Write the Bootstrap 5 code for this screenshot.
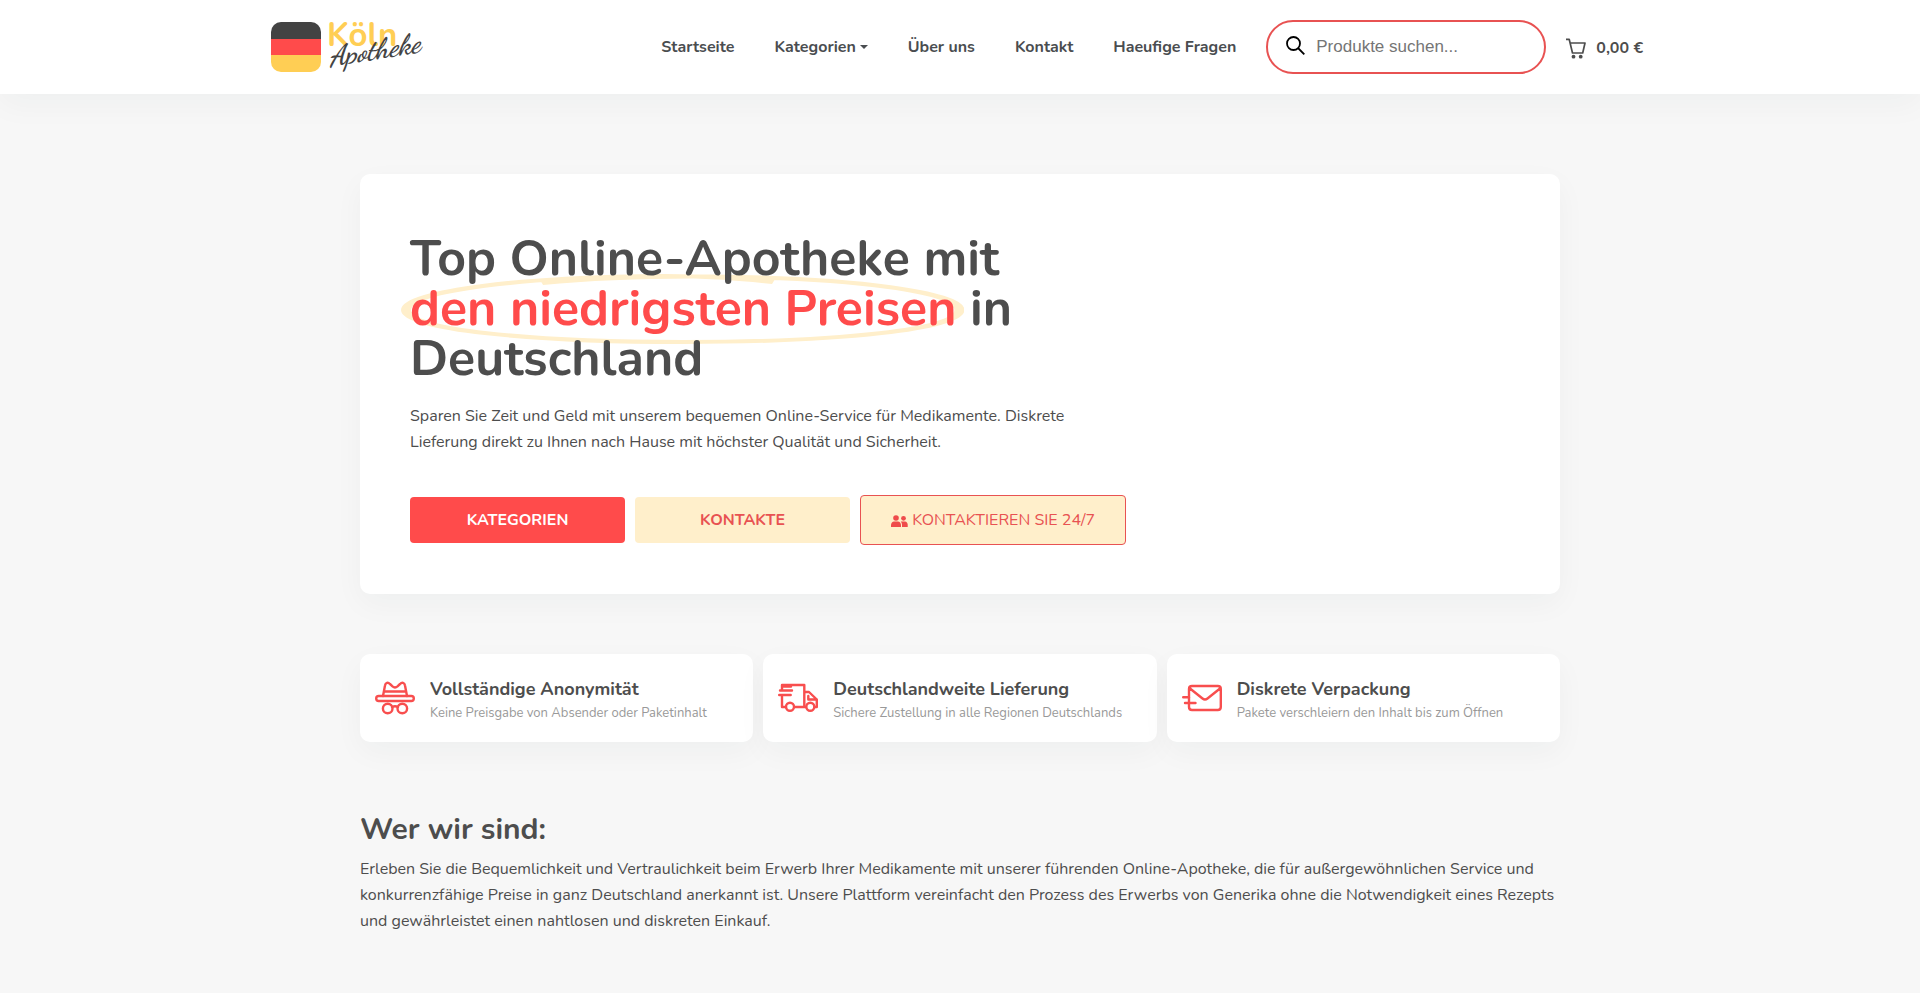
<!DOCTYPE html>
<html lang="de">
<head>
<meta charset="utf-8">
<meta name="viewport" content="width=device-width, initial-scale=1">
<title>Köln Apotheke</title>
<link href="https://cdn.jsdelivr.net/npm/bootstrap@5.3.0/dist/css/bootstrap.min.css" rel="stylesheet">
<style>
  :root { --ink: #4d4d4d; --brand: #ff4b4b; --cream: #ffefcb; --line: #e85252; }
  body { font-family: Nunito, Lato, "Open Sans", sans-serif; font-size: 16px; line-height: 26px; color: var(--ink); background: #f7f7f7; }
  .shade { box-shadow: 0 10px 30px rgba(20, 50, 60, .04); }
  .site-header { background: #fff; padding: 20px 0; }
  .wide-box { max-width: 1400px; padding: 0 11px; }
  .page-box { max-width: 1224px; }
  .main-menu { gap: 0 40px; margin-right: 30px; }
  .main-menu .nav-link { padding: 0; font-weight: 700; color: #4a4d50; }
  .main-menu .dropdown-toggle::after { margin-left: 4px; border-top-width: 4px; border-left-width: 4px; border-right-width: 4px; vertical-align: 3px; }
  .search-field { width: 280px; height: 54px; border: 2px solid var(--line); border-radius: 27px; padding: 0 18px; gap: 11px; }
  .search-field input { font: 17px "Liberation Sans", Arial, sans-serif; border: 0; outline: 0; min-width: 0; background: none; }
  .search-field input::placeholder { color: #757575; opacity: 1; }
  .cart-link { gap: 10px; margin: 2px 6px 0 20px; font-weight: 700; color: var(--ink); text-decoration: none; }
  .hero { background: #fff; border-radius: 10px; padding: 60px 50px 49px; margin-top: 80px; isolation: isolate; }
  .hero h1 { font-size: 50px; line-height: 50px; font-weight: 700; max-width: 670px; margin: 0; }
  .hero p { max-width: 670px; margin: 19px 0 40px; }
  .circled { position: relative; display: inline-block; color: var(--brand); }
  .circled svg { position: absolute; left: -9px; top: -10px; width: calc(100% + 17px); height: 70px; z-index: -1; }
  .hero-btns { gap: 10px; }
  .hero-btn { width: 215px; padding: 10px 12px; border: 0; border-radius: 4px; font-size: 16px; line-height: 26px; font-weight: 700; text-transform: uppercase; }
  .btn-brand, .btn-brand:hover { background: var(--brand); color: #fff; }
  .btn-cream, .btn-cream:hover { background: var(--cream); color: var(--line); }
  .btn-chat, .btn-chat:hover { width: auto; padding: 11px 30px; border: 1px solid var(--line); font-weight: 400; }
  .perks { display: grid; gap: 10px; grid-template-columns: repeat(auto-fit, minmax(340px, 1fr)); margin-top: 60px; }
  .perk { background: #fff; border-radius: 10px; padding: 22px 15px 18px; gap: 15px; }
  .perk h2 { font-size: 18px; line-height: 26px; font-weight: 700; margin: 0; }
  .perk p { font-size: 13px; line-height: 22px; color: #999; margin: 0; }
  .perk svg { stroke: #f84e4e; fill: none; stroke-width: 2.4; stroke-linecap: round; stroke-linejoin: round; }
  .about { margin-top: 70px; }
  .about h2 { font-size: 30px; line-height: 36px; font-weight: 700; margin: 0 0 8px; }
  .brand-logo { overflow: visible; }
  .logo-name { font: 700 33px Nunito, Lato, sans-serif; fill: #ffce54; }
  .logo-script { font: 700 28px "Dancing Script", "Liberation Serif", serif; font-style: italic; fill: #434343; }
</style>
</head>
<body>
<header class="site-header shade">
  <div class="container-fluid wide-box d-flex flex-wrap align-items-center">
    <a href="#" class="d-block me-auto" aria-label="Köln Apotheke">
      <svg class="brand-logo d-block" width="156" height="54" viewBox="0 0 156 54">
        <clipPath id="flag"><rect y="2" width="50" height="50" rx="10"/></clipPath>
        <g clip-path="url(#flag)"><path fill="#434343" d="M0 2h50v17H0z"/><path fill="#ff4b4b" d="M0 19h50v16H0z"/><path fill="#ffce54" d="M0 35h50v17H0z"/></g>
        <text class="logo-name" x="56" y="26">Köln</text>
        <text class="logo-script" x="59" y="46" transform="rotate(-9 59 46)">Apotheke</text>
      </svg>
    </a>
    <nav aria-label="Hauptmenü">
      <ul class="nav main-menu">
        <li class="nav-item"><a class="nav-link" href="#">Startseite</a></li>
        <li class="nav-item dropdown"><a class="nav-link dropdown-toggle" href="#" data-bs-toggle="dropdown">Kategorien</a></li>
        <li class="nav-item"><a class="nav-link" href="#">Über uns</a></li>
        <li class="nav-item"><a class="nav-link" href="#">Kontakt</a></li>
        <li class="nav-item"><a class="nav-link" href="#">Haeufige Fragen</a></li>
      </ul>
    </nav>
    <form class="search-field d-flex align-items-center" role="search">
      <label for="q" class="pb-1" aria-label="Produkte suchen"><svg class="d-block" width="19" height="19" viewBox="0 0 19 19" fill="none" stroke="#000" stroke-width="1.8"><circle cx="7.5" cy="7.5" r="6.5"/><path d="M12 12l6.300 6.300"/></svg></label>
      <input id="q" class="flex-grow-1 p-0" type="search" placeholder="Produkte suchen...">
    </form>
    <a href="#" class="cart-link d-flex align-items-center">
      <svg width="20" height="21" viewBox="0 0 20 21" fill="none" stroke="#4d4d4d" stroke-width="1.700" stroke-linejoin="round"><path d="M0 1.300h3.200L6.500 15h10.200L19 5H4.200"/><circle cx="7.500" cy="18.700" r="1.900" fill="#4d4d4d" stroke="none"/><circle cx="14.700" cy="18.700" r="1.900" fill="#4d4d4d" stroke="none"/></svg>
      <span>0,00&nbsp;€</span>
    </a>
  </div>
</header>

<main class="container-fluid page-box">
  <section class="hero shade">
    <h1>Top Online-Apotheke mit <span class="circled">den niedrigsten Preisen<svg viewBox="0 0 224 70" preserveAspectRatio="none" fill="none" stroke="#ffefcb" stroke-width="4" aria-hidden="true"><path d="M56 9C80 3 105 2 125 2.500C180 4 222 18 222 36C222 55 175 68 112 68C50 68 2 55 2 36C2 17 50 2 105 2C122 2 136 5 148 8"/></svg></span> in Deutschland</h1>
    <p>Sparen Sie Zeit und Geld mit unserem bequemen Online-Service für Medikamente. Diskrete Lieferung direkt zu Ihnen nach Hause mit höchster Qualität und Sicherheit.</p>
    <div class="hero-btns d-flex flex-wrap align-items-center">
      <button type="button" class="btn hero-btn btn-brand">Kategorien</button>
      <button type="button" class="btn hero-btn btn-cream">Kontakte</button>
      <button type="button" class="btn hero-btn btn-cream btn-chat"><svg width="17" height="12" viewBox="0 0 17 12" fill="#ef4b4b" aria-hidden="true"><circle cx="5" cy="3" r="2.800"/><circle cx="12.500" cy="3.300" r="2.400"/><path d="M0 12v-2c0-2 1.500-3.300 3-3.500h4c1.600.2 3 1.500 3 3.500v2zM11 12v-2c0-1.400-.5-2.500-1.300-3.400h4.300c1.500.2 2.700 1.400 2.700 3V12z"/></svg> Kontaktieren Sie 24/7</button>
    </div>
  </section>

  <section class="perks">
    <article class="perk shade d-flex align-items-center">
      <svg class="flex-shrink-0 mb-1" width="40" height="40" viewBox="0 0 40 40"><path d="M8 18L10 7.500C10.500 4.500 13 4 15 6l2.500 2.300c1.500 1.300 3.500 1.300 5 0L25 6c2-2 4.500-1.500 5 1.500L32 18M9 13.500h22"/><rect x="1.200" y="18" width="37.600" height="5" rx="2.500"/><circle cx="12.700" cy="30.500" r="4.800"/><circle cx="27.300" cy="30.500" r="4.800"/><path d="M17 29q3-1.500 6 0"/></svg>
      <div><h2>Vollständige Anonymität</h2><p>Keine Preisgabe von Absender oder Paketinhalt</p></div>
    </article>
    <article class="perk shade d-flex align-items-center">
      <svg class="flex-shrink-0 mb-1" width="40" height="40" viewBox="0 0 40 40"><path d="M4 12V7h22.300v22H17M8 29H4V17M4 8.500h9M2 12.500h12M1.200 17h11.500M26.300 14H31l7.800 7.500V29h-2M28 29h-2M38.800 21.500h-8.500V18"/><circle cx="12" cy="28.700" r="4"/><circle cx="32.300" cy="28.700" r="4"/></svg>
      <div><h2>Deutschlandweite Lieferung</h2><p>Sichere Zustellung in alle Regionen Deutschlands</p></div>
    </article>
    <article class="perk shade d-flex align-items-center">
      <svg class="flex-shrink-0 mb-1" width="40" height="40" viewBox="0 0 40 40"><path d="M7 24V11q0-3 3-3h25.800q3 0 3 3v18q0 3-3 3H10q-3 0-3-3v-4M8 10.500l12.500 10q2.500 2 5 0L38 10.500M1.200 19.300h6M3 25h10.500"/></svg>
      <div><h2>Diskrete Verpackung</h2><p>Pakete verschleiern den Inhalt bis zum Öffnen</p></div>
    </article>
  </section>

  <section class="about">
    <h2>Wer wir sind:</h2>
    <p>Erleben Sie die Bequemlichkeit und Vertraulichkeit beim Erwerb Ihrer Medikamente mit unserer führenden Online-Apotheke, die für außergewöhnlichen Service und konkurrenzfähige Preise in ganz Deutschland anerkannt ist. Unsere Plattform vereinfacht den Prozess des Erwerbs von Generika ohne die Notwendigkeit eines Rezepts und gewährleistet einen nahtlosen und diskreten Einkauf.</p>
  </section>
</main>
<script src="https://cdn.jsdelivr.net/npm/bootstrap@5.3.0/dist/js/bootstrap.bundle.min.js"></script>
</body>
</html>
